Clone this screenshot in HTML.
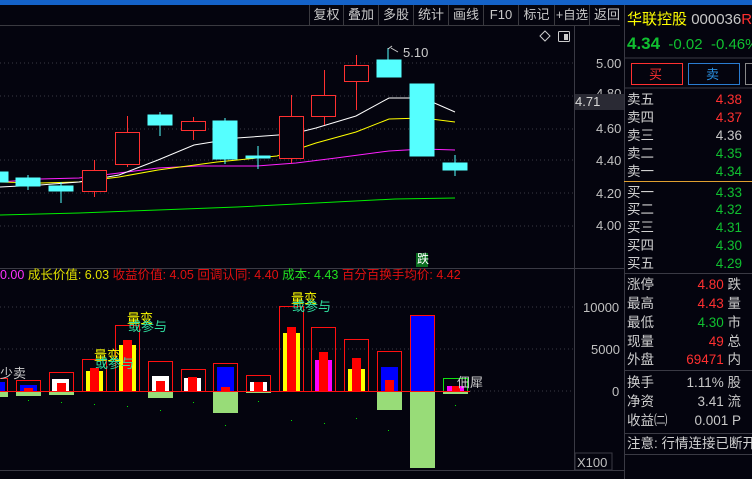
<!DOCTYPE html>
<html><head><meta charset="utf-8"><style>
*{margin:0;padding:0;box-sizing:border-box}
body{width:752px;height:479px;background:#04040e;overflow:hidden;position:relative;font-family:"Liberation Sans","Noto Sans CJK SC",sans-serif;}
.t{position:absolute;white-space:nowrap;font-size:13px;line-height:15px}
.tb{position:absolute;top:5px;height:20px;border-left:1px solid #3a3a40;color:#c8c8c8;font-size:13px;line-height:20px;text-align:center}
.r{position:absolute;left:627px;font-size:13.5px;line-height:15px;color:#d0d0d0;white-space:nowrap}
.v{position:absolute;right:11px;font-size:13.5px;line-height:15px;text-align:right}
</style></head><body>
<div style="position:absolute;left:0;top:0;width:752px;height:5px;background:#1462c8"></div>
<div style="position:absolute;left:0;top:25px;width:620px;height:1px;background:#3a3a40"></div>
<div class="tb" style="left:309px;width:34px">复权</div>
<div class="tb" style="left:343px;width:35px">叠加</div>
<div class="tb" style="left:378px;width:35px">多股</div>
<div class="tb" style="left:413px;width:35px">统计</div>
<div class="tb" style="left:448px;width:35px">画线</div>
<div class="tb" style="left:483px;width:35px">F10</div>
<div class="tb" style="left:518px;width:36px">标记</div>
<div class="tb" style="left:554px;width:35px;font-size:12.5px">+自选</div>
<div class="tb" style="left:589px;width:35px">返回</div>

<svg width="752" height="479" style="position:absolute;left:0;top:0">
<g stroke="#3a3a44" stroke-dasharray="1,3" stroke-width="1">
<line x1="0" y1="63" x2="574" y2="63"/><line x1="0" y1="96" x2="574" y2="96"/><line x1="0" y1="129" x2="574" y2="129"/><line x1="0" y1="160" x2="574" y2="160"/><line x1="0" y1="193" x2="574" y2="193"/><line x1="0" y1="226" x2="574" y2="226"/>
<line x1="0" y1="307" x2="574" y2="307"/><line x1="0" y1="349" x2="574" y2="349"/><line x1="470" y1="391" x2="574" y2="391"/>
</g>
<line x1="574.5" y1="26" x2="574.5" y2="470" stroke="#3a3a44"/>
<line x1="0" y1="268.5" x2="624" y2="268.5" stroke="#3a3a44"/>
<line x1="0" y1="470.5" x2="624" y2="470.5" stroke="#3a3a44"/>
<line x1="624.5" y1="5" x2="624.5" y2="479" stroke="#3a3a44"/>
<!-- MAs -->
<polyline fill="none" stroke="#00ee00" stroke-width="1" points="0,215 79,213 158,210 237,207 316,203 395,199 455,198"/>
<polyline fill="none" stroke="#ff20ff" stroke-width="1" points="0,182 40,179 79,178 119,173 158,168 198,166 257,166 296,163 336,158 389,151 423,149 455,150"/>
<polyline fill="none" stroke="#ffff00" stroke-width="1" points="0,182 40,183 79,182 119,177 158,170 217,162 277,156 316,143 356,132 389,119 423,118 455,122"/>
<polyline fill="none" stroke="#ffffff" stroke-width="1" points="0,187 40,185 79,182 119,175 158,160 194,145 237,138 292,134 316,128 356,116 389,98 423,98 455,112"/>
<!-- candles -->
<g stroke="#ff3030" fill="none">
<line x1="94.5" y1="160" x2="94.5" y2="197"/><rect x="82.5" y="170.5" width="24" height="21" fill="#04040e"/>
<line x1="127.5" y1="116" x2="127.5" y2="167"/><rect x="115.5" y="132.5" width="24" height="32" fill="#04040e"/>
<line x1="193.5" y1="117" x2="193.5" y2="140"/><rect x="181.5" y="121.5" width="24" height="9" fill="#04040e"/>
<line x1="291.5" y1="95" x2="291.5" y2="163"/><rect x="279.5" y="116.5" width="24" height="42" fill="#04040e"/>
<line x1="324.5" y1="70" x2="324.5" y2="125"/><rect x="311.5" y="95.5" width="24" height="21" fill="#04040e"/>
<line x1="356.5" y1="55" x2="356.5" y2="110"/><rect x="344.5" y="65.5" width="24" height="16" fill="#04040e"/>
</g>
<g fill="#55ffff" stroke="#55ffff">
<rect x="0" y="172" width="8" height="10"/>
<line x1="28" y1="175" x2="28" y2="190"/><rect x="16" y="178" width="24" height="8"/>
<line x1="61" y1="182" x2="61" y2="203"/><rect x="49" y="186" width="24" height="5"/>
<line x1="160" y1="112" x2="160" y2="136"/><rect x="148" y="115" width="24" height="10"/>
<line x1="225" y1="118" x2="225" y2="164"/><rect x="213" y="121" width="24" height="38"/>
<line x1="258" y1="146" x2="258" y2="169"/><rect x="246" y="156" width="24" height="2"/>
<line x1="388" y1="48" x2="388" y2="60"/><rect x="377" y="60" width="24" height="17"/>
<rect x="410" y="84" width="24" height="72"/>
<line x1="455" y1="155" x2="455" y2="176"/><rect x="443" y="163" width="24" height="7"/>
</g>
<path d="M388 49 L392 46 M391 48 L398 52" stroke="#ccc" fill="none"/>
<!-- volume -->
<g fill="#98dc78">
<rect x="0" y="392" width="8" height="5"/><rect x="16" y="392" width="25" height="4"/><rect x="49" y="392" width="25" height="3"/><rect x="148" y="392" width="25" height="6"/><rect x="213" y="392" width="25" height="21"/><rect x="246" y="392" width="25" height="1"/><rect x="377" y="392" width="25" height="18"/><rect x="410" y="392" width="25" height="76"/><rect x="443" y="392" width="25" height="2"/>
</g>
<g stroke="#ff1010" fill="none">
<rect x="-1.5" y="378.5" width="9" height="13"/><rect x="16.5" y="380.5" width="24" height="11"/><rect x="49.5" y="372.5" width="24" height="19"/><rect x="82.5" y="359.5" width="24" height="32"/><rect x="115.5" y="325.5" width="24" height="66"/><rect x="148.5" y="361.5" width="24" height="30"/><rect x="181.5" y="369.5" width="24" height="22"/><rect x="213.5" y="363.5" width="24" height="28"/><rect x="246.5" y="375.5" width="24" height="16"/><rect x="279.5" y="306.5" width="24" height="85"/><rect x="311.5" y="327.5" width="24" height="64"/><rect x="344.5" y="339.5" width="24" height="52"/><rect x="377.5" y="351.5" width="24" height="40"/><rect x="410.5" y="315.5" width="24" height="76"/>
</g>
<rect x="443.5" y="378.5" width="24" height="13" stroke="#10e010" fill="none"/>
<g>
<rect x="0" y="382" width="5" height="10" fill="#0000ff"/>
<rect x="20" y="385" width="17" height="7" fill="#0000ff"/><rect x="24" y="388" width="9" height="4" fill="#ff0000"/>
<rect x="52" y="379" width="17" height="13" fill="#fff"/><rect x="57" y="383" width="9" height="9" fill="#f00"/>
<rect x="86" y="371" width="17" height="21" fill="#ff0"/><rect x="90" y="368" width="9" height="24" fill="#f00"/>
<rect x="119" y="345" width="17" height="47" fill="#ff0"/><rect x="123" y="340" width="9" height="52" fill="#f00"/>
<rect x="152" y="376" width="17" height="16" fill="#fff"/><rect x="156" y="381" width="9" height="11" fill="#f00"/>
<rect x="184" y="378" width="17" height="14" fill="#fff"/><rect x="188" y="377" width="9" height="15" fill="#f00"/>
<rect x="217" y="367" width="17" height="25" fill="#00f"/><rect x="221" y="387" width="9" height="5" fill="#f00"/>
<rect x="250" y="382" width="17" height="10" fill="#fff"/><rect x="254" y="382" width="9" height="10" fill="#f00"/>
<rect x="283" y="333" width="17" height="59" fill="#ff0"/><rect x="287" y="327" width="9" height="65" fill="#f00"/>
<rect x="315" y="360" width="17" height="32" fill="#f0f"/><rect x="319" y="352" width="9" height="40" fill="#f00"/>
<rect x="348" y="369" width="17" height="23" fill="#ff0"/><rect x="352" y="358" width="9" height="34" fill="#f00"/>
<rect x="381" y="367" width="17" height="25" fill="#00f"/><rect x="385" y="380" width="9" height="12" fill="#f00"/>
<rect x="411" y="316" width="23" height="76" fill="#00f"/>
<rect x="447" y="386" width="17" height="6" fill="#f0f"/><rect x="452" y="386" width="8" height="6" fill="#f00"/>
</g>
<line x1="0" y1="391.5" x2="470" y2="391.5" stroke="#ff1010"/>
<g fill="#00e000"><rect x="28" y="400" width="1" height="1"/><rect x="61" y="402" width="1" height="1"/><rect x="94" y="404" width="1" height="1"/><rect x="127" y="406" width="1" height="1"/><rect x="160" y="410" width="1" height="1"/><rect x="193" y="402" width="1" height="1"/><rect x="225" y="425" width="1" height="1"/><rect x="258" y="401" width="1" height="1"/><rect x="291" y="420" width="1" height="1"/><rect x="324" y="423" width="1" height="1"/><rect x="356" y="418" width="1" height="1"/><rect x="388" y="430" width="1" height="1"/><rect x="455" y="405" width="1" height="1"/></g>
<rect x="575" y="453" width="37" height="17" fill="none" stroke="#3a3a44"/>
<path d="M545 31 L550 36 L545 41 L540 36 Z" stroke="#ccc" fill="none"/>
<rect x="558.5" y="31.5" width="11" height="10" rx="1" stroke="#ccc" fill="none"/><rect x="564" y="34" width="4" height="6" fill="#ccc"/>
<rect x="416" y="253" width="12" height="14" fill="#0a6e20"/>
<line x1="624" y1="58" x2="752" y2="58" stroke="#3a3a44"/>
<line x1="624" y1="88" x2="752" y2="88" stroke="#3a3a44"/>
<line x1="624" y1="181.5" x2="752" y2="181.5" stroke="#e0a030"/>
<line x1="624" y1="273.5" x2="752" y2="273.5" stroke="#3a3a44"/>
<line x1="624" y1="370.5" x2="752" y2="370.5" stroke="#3a3a44"/>
<line x1="624" y1="433.5" x2="752" y2="433.5" stroke="#3a3a44"/>
<line x1="624" y1="454.5" x2="752" y2="454.5" stroke="#3a3a44"/>
<rect x="631.5" y="63.5" width="51" height="21" stroke="#ff3030" fill="none"/>
<rect x="688.5" y="63.5" width="51" height="21" stroke="#2a7cd0" fill="none"/>
<rect x="745.5" y="63.5" width="10" height="21" stroke="#888" fill="none"/>
</svg>
<div class="t" style="left:403px;top:45px;color:#ccc">5.10</div>
<div class="t" style="left:596px;top:56px;color:#c0c0c0">5.00</div>
<div class="t" style="left:596px;top:86px;color:#c0c0c0">4.80</div>
<div class="t" style="left:575px;top:94px;width:49px;height:16px;line-height:16px;color:#d8d8d8;background:#2a2a34">4.71</div>
<div class="t" style="left:596px;top:121px;color:#c0c0c0">4.60</div>
<div class="t" style="left:596px;top:153px;color:#c0c0c0">4.40</div>
<div class="t" style="left:596px;top:186px;color:#c0c0c0">4.20</div>
<div class="t" style="left:596px;top:218px;color:#c0c0c0">4.00</div>
<div class="t" style="left:417px;top:252px;color:#fff;font-size:12px">跌</div>
<div class="t" style="left:0;top:268px;font-size:12.5px"><span style="color:#ff30ff">0.00</span> <span style="color:#e0e000">成长价值: 6.03</span> <span style="color:#e01010">收益价值: 4.05 回调认同: 4.40</span> <span style="color:#20e020">成本: 4.43</span> <span style="color:#e01010">百分百换手均价: 4.42</span></div>
<div class="t" style="left:583px;top:300px;color:#c0c0c0">10000</div>
<div class="t" style="left:591px;top:342px;color:#c0c0c0">5000</div>
<div class="t" style="left:612px;top:384px;color:#c0c0c0">0</div>
<div class="t" style="left:577px;top:455px;color:#c0c0c0">X100</div>
<div class="t" style="left:0;top:366px;color:#ccc">少卖</div>
<div class="t" style="left:94px;top:348px;color:#ff0">量变</div>
<div class="t" style="left:95px;top:356px;color:#30e0a0">或参与</div>
<div class="t" style="left:127px;top:311px;color:#ff0">量变</div>
<div class="t" style="left:128px;top:319px;color:#30e0a0">或参与</div>
<div class="t" style="left:291px;top:291px;color:#ff0">量变</div>
<div class="t" style="left:292px;top:299px;color:#30e0a0">或参与</div>
<div class="t" style="left:457px;top:375px;color:#ccc">佃犀</div>

<div class="r" style="top:11px;font-size:15px;line-height:18px"><span style="color:#ffff00">华联控股</span> <span style="color:#c8c8c8">000036</span><span style="color:#ff3030">R</span></div>
<div class="r" style="top:35px;font-size:15px;line-height:18px;color:#10c030"><b style="font-size:17px">4.34</b>&nbsp; -0.02&nbsp; -0.46%</div>
<div class="t" style="left:649px;top:67px;color:#ff3030;font-size:13px">买</div>
<div class="t" style="left:706px;top:67px;color:#2a90e0;font-size:13px">卖</div>
<div class="r" style="top:92px">卖五</div><div class="v" style="top:92px;right:10px;color:#ff3030">4.38</div>
<div class="r" style="top:110px">卖四</div><div class="v" style="top:110px;right:10px;color:#ff3030">4.37</div>
<div class="r" style="top:128px">卖三</div><div class="v" style="top:128px;right:10px;color:#c8c8c8">4.36</div>
<div class="r" style="top:146px">卖二</div><div class="v" style="top:146px;right:10px;color:#10c030">4.35</div>
<div class="r" style="top:164px">卖一</div><div class="v" style="top:164px;right:10px;color:#10c030">4.34</div>
<div class="r" style="top:185px">买一</div><div class="v" style="top:185px;right:10px;color:#10c030">4.33</div>
<div class="r" style="top:202px">买二</div><div class="v" style="top:202px;right:10px;color:#10c030">4.32</div>
<div class="r" style="top:220px">买三</div><div class="v" style="top:220px;right:10px;color:#10c030">4.31</div>
<div class="r" style="top:238px">买四</div><div class="v" style="top:238px;right:10px;color:#10c030">4.30</div>
<div class="r" style="top:256px">买五</div><div class="v" style="top:256px;right:10px;color:#10c030">4.29</div>
<div class="r" style="top:277px">涨停</div><div class="v" style="top:277px;color:#ff3030">4.80<span style="color:#ccc"> 跌</span></div>
<div class="r" style="top:296px">最高</div><div class="v" style="top:296px;color:#ff3030">4.43<span style="color:#ccc"> 量</span></div>
<div class="r" style="top:315px">最低</div><div class="v" style="top:315px;color:#10c030">4.30<span style="color:#ccc"> 市</span></div>
<div class="r" style="top:334px">现量</div><div class="v" style="top:334px;color:#ff3030">49<span style="color:#ccc"> 总</span></div>
<div class="r" style="top:352px">外盘</div><div class="v" style="top:352px;color:#ff3030">69471<span style="color:#ccc"> 内</span></div>
<div class="r" style="top:375px">换手</div><div class="v" style="top:375px;color:#c8c8c8">1.11% 股</div>
<div class="r" style="top:394px">净资</div><div class="v" style="top:394px;color:#c8c8c8">3.41 流</div>
<div class="r" style="top:413px">收益㈡</div><div class="v" style="top:413px;color:#c8c8c8">0.001 P</div>
<div class="r" style="top:436px">注意: 行情连接已断开</div>
</body></html>
